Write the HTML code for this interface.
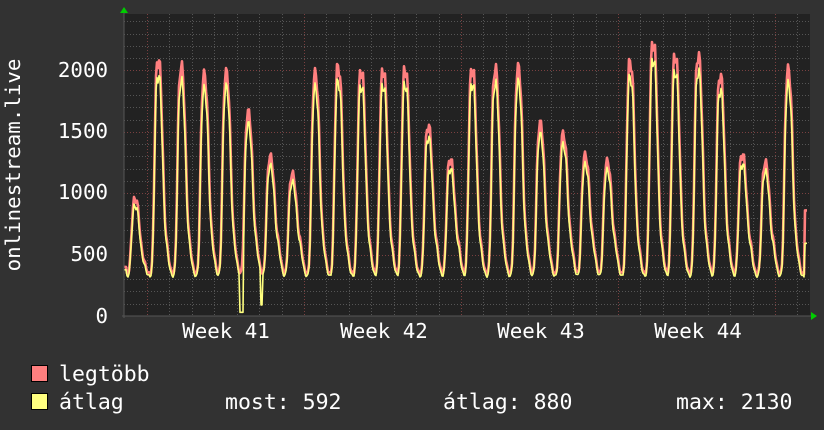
<!DOCTYPE html>
<html><head><meta charset="utf-8"><style>
html,body{margin:0;padding:0;background:#323232;width:824px;height:430px;overflow:hidden}
svg text{font-family:"DejaVu Sans Mono","Liberation Mono",monospace;fill:#fff}
</style></head><body>
<svg id="g" width="824" height="430" xmlns="http://www.w3.org/2000/svg">
<rect x="0" y="0" width="824" height="430" fill="#323232"/>
<rect x="124" y="14" width="686" height="302" fill="#222"/>
<g id="grid"></g>
<polyline id="red" fill="none" stroke="#ff7f7f" stroke-width="2.6" stroke-linejoin="round"/>
<polyline id="yel" fill="none" stroke="#ffff7f" stroke-width="1.6" stroke-linejoin="round"/>
<line x1="124" y1="12" x2="124" y2="318" stroke="#555" stroke-width="1"/>
<line x1="122" y1="316" x2="812" y2="316" stroke="#555" stroke-width="1"/>
<polygon points="120,13 128,13 124,7" fill="#00cc00"/>
<polygon points="811,312 811,320 817,316" fill="#00cc00"/>
<g font-size="20.8" text-anchor="end">
<text x="108" y="77">2000</text>
<text x="108" y="138">1500</text>
<text x="108" y="199">1000</text>
<text x="108" y="261">500</text>
<text x="108" y="323">0</text>
</g>
<g font-size="20.8" text-anchor="middle">
<text x="226" y="338">Week 41</text>
<text x="384" y="338">Week 42</text>
<text x="541" y="338">Week 43</text>
<text x="698" y="338">Week 44</text>
</g>
<text font-size="20.8" transform="translate(20,165) rotate(-90)" text-anchor="middle">onlinestream.live</text>
<rect x="31.5" y="365.5" width="16" height="16" fill="#ff7f7f" stroke="#000"/>
<rect x="31.5" y="393.5" width="16" height="16" fill="#ffff7f" stroke="#000"/>
<g font-size="21.5">
<text x="59" y="381">legtöbb</text>
<text x="59" y="409">átlag</text>
<text x="225" y="409">most: 592</text>
<text x="443" y="409">átlag: 880</text>
<text x="676" y="409">max: 2130</text>
</g>
</svg>
<script>
var ns="http://www.w3.org/2000/svg",g=document.getElementById("grid");
function ln(x1,y1,x2,y2,c){var l=document.createElementNS(ns,"line");l.setAttribute("x1",x1);l.setAttribute("y1",y1);l.setAttribute("x2",x2);l.setAttribute("y2",y2);l.setAttribute("stroke",c);l.setAttribute("stroke-width","1");l.setAttribute("stroke-dasharray","1,2");g.appendChild(l);}
function Y(v){return 316-v*0.1228;}
for(var v=100;v<=2400;v+=100){var y=Math.round(Y(v))+0.5;ln(124,y,810,y,v%500==0?"#7a4040":"#555");}
for(var x=147-22.43;x<810;x+=22.43){var xx=Math.round(x)+0.5;if(xx<126)continue;var maj=Math.abs(((x-147)/157)-Math.round((x-147)/157))<0.01;ln(xx,14,xx,316,maj?"#7a4040":"#555");}
var peaks=[[135,950],[158,2080],[181,2020],[204,1950],[226,1970],[248,1650],[270,1290],[292,1150],[315,1960],[338,2020],[361,1990],[383,1990],[405,2000],[428,1540],[450,1270],[472,2010],[495,2000],[518,2010],[540,1560],[563,1470],[585,1300],[607,1250],[630,2060],[653,2220],[675,2110],[698,2110],[720,1950],[742,1310],[765,1240],[788,1990]];
function val(x){var b=340;var s=b;for(var i=0;i<peaks.length;i++){var d=x-peaks[i][0];var w=d<0?4.2:5.5;s+=(peaks[i][1]-b)*Math.exp(-Math.pow(Math.abs(d/w),3));
var d2=x-(peaks[i][0]+8);s+=(peaks[i][1]>1000?250:120)*Math.exp(-(d2*d2)/12);}
return s;}
var r=[],yl=[];
for(var x=124;x<=807;x++){var v=val(x)*(1+0.03*Math.sin(x*1.7));
if(x<=126)v=400;if(x>=805)v=860;
var a=v*0.94;
if(x>=240&&x<=243)a=30;if(x>=261&&x<=262)a=90;
if(x>=805)a=592;
r.push(x+","+Y(v).toFixed(1));yl.push(x+","+Y(a).toFixed(1));}
document.getElementById("red").setAttribute("points",r.join(" "));
document.getElementById("yel").setAttribute("points",yl.join(" "));
</script>
</body></html>
